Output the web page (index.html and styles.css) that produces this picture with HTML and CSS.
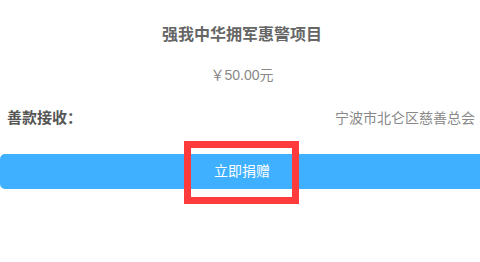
FILE: index.html
```html
<!DOCTYPE html>
<html>
<head>
<meta charset="utf-8">
<link rel="stylesheet" href="styles.css">
</head>
<body>
<div class="page">
  <div class="content">
    <h1 class="title">强我中华拥军惠警项目</h1>
    <div class="price">￥50.00元</div>
    <div class="row">
      <span class="label">善款接收：</span>
      <span class="value">宁波市北仑区慈善总会</span>
    </div>
    <div class="btn-wrap">
      <div class="btn">立即捐赠</div>
      <div class="highlight"></div>
    </div>
  </div>
</div>
</body>
</html>
```

FILE: styles.css
```css
body {
  margin: 0;
  padding: 0;
  background: #fff;
}
.page {
  width: 480px;
  height: 262px;
  overflow: hidden;
}
.content {
  width: 484px;
  font-family: "Liberation Sans", "Noto Sans CJK SC", sans-serif;
  color: #666;
}
.title {
  margin: 0;
  padding-top: 23px;
  font-size: 16px;
  line-height: 24px;
  font-weight: bold;
  text-align: center;
  color: #666;
}
.price {
  margin-top: 18px;
  font-size: 14px;
  line-height: 20px;
  text-align: center;
  color: #888;
}
.row {
  margin-top: 23px;
  display: flex;
  justify-content: space-between;
  align-items: center;
  padding: 0 9px 0 7px;
  line-height: 20px;
}
.label {
  font-size: 15px;
  font-weight: bold;
  color: #555;
}
.value {
  font-size: 14px;
  color: #888;
}
.btn-wrap {
  position: relative;
  margin-top: 26px;
}
.btn {
  height: 35px;
  line-height: 35px;
  background: #3fb0ff;
  border-radius: 5px;
  color: #fff;
  font-size: 14px;
  text-align: center;
}
.highlight {
  position: absolute;
  left: 184px;
  top: -13px;
  width: 101px;
  height: 49px;
  border: 7px solid #ff3b3b;
}
```
